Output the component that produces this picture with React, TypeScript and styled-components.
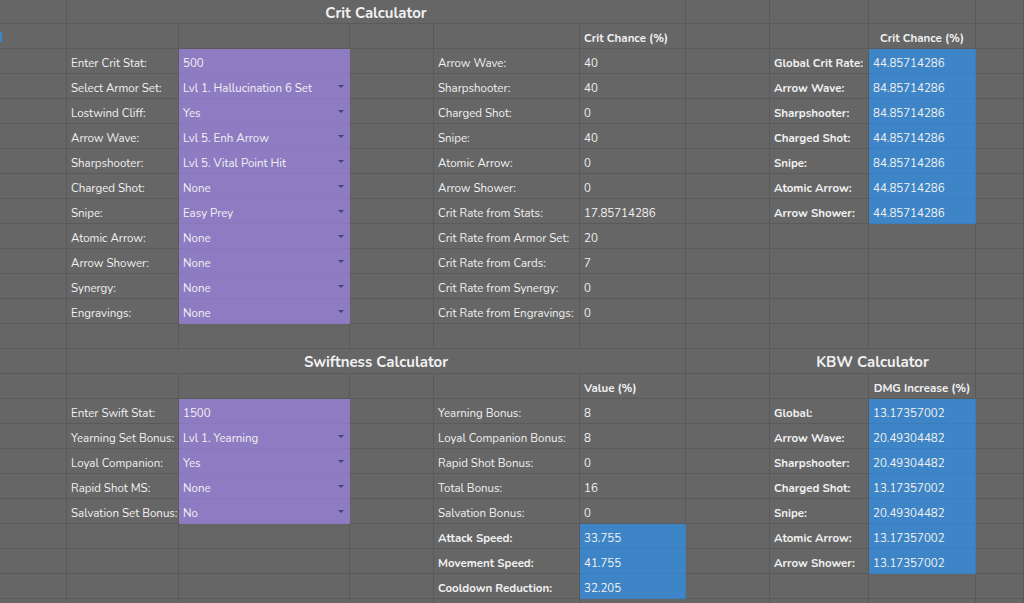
import React from "react";
import styled, { createGlobalStyle, css } from "styled-components";

const Global = createGlobalStyle`
  html, body { margin: 0; padding: 0; background: #666666; overflow: hidden; }
  body { font-family: "Nunito", "Open Sans", "Lato", sans-serif; }
`;

const Sheet = styled.div`
  display: grid;
  grid-template-columns: 67px 112px 171px 84px 146px 106px 84px 99px 107px 48px;
  grid-template-rows: 24px repeat(24, 25px);
  width: 1024px;
  height: 603px;
  overflow: hidden;
  background: #666666;
`;

type Fill = "none" | "purple" | "blue";

const Cell = styled.div<{ $fill?: Fill; $bold?: boolean; $center?: boolean; $title?: boolean; $span?: number }>`
  box-sizing: border-box;
  border-right: 1px solid #5a5a5a;
  border-bottom: 1px solid #5a5a5a;
  color: #f1f1f1;
  font-size: 11.5px;
  padding: 6px 4px 0 4px;
  white-space: nowrap;
  overflow: visible;
  position: relative;
  font-weight: ${(p) => (p.$bold ? 700 : 400)};
  text-align: ${(p) => (p.$center ? "center" : "left")};
  ${(p) => p.$span && css`grid-column: span ${p.$span};`}
  ${(p) => p.$fill === "purple" && css`background: #8e7cc3; border-color: #8a78bd;`}
  ${(p) => p.$fill === "blue" && css`background: #3d85c6; border-color: #3a7fbd;`}
  ${(p) => p.$title && css`font-size: 15px; font-weight: 700; text-align: center; padding-top: 3px;`}
`;

const Arrow = styled.span`
  position: absolute;
  right: 5px;
  top: 11px;
  width: 0;
  height: 0;
  border-left: 3px solid transparent;
  border-right: 3px solid transparent;
  border-top: 3px solid #4a3f78;
`;

const LeftMark = styled.span`
  position: absolute;
  left: 0;
  top: 8px;
  width: 2px;
  height: 10px;
  background: #3d85c6;
`;

type C = { t?: string; f?: Fill; b?: boolean; c?: boolean; dd?: boolean; title?: boolean; span?: number };

const E: C = {};
const rows: C[][] = [];

rows.push([E, { t: "Crit Calculator", title: true, span: 5 }, E, E, E, E]);
rows.push([E, E, E, E, E, { t: "Crit Chance (%)", b: true }, E, E, { t: "Crit Chance (%)", b: true, c: true }, E]);

const critLeft: [string, string, boolean][] = [
  ["Enter Crit Stat:", "500", false],
  ["Select Armor Set:", "Lvl 1. Hallucination 6 Set", true],
  ["Lostwind Cliff:", "Yes", true],
  ["Arrow Wave:", "Lvl 5. Enh Arrow", true],
  ["Sharpshooter:", "Lvl 5. Vital Point Hit", true],
  ["Charged Shot:", "None", true],
  ["Snipe:", "Easy Prey", true],
  ["Atomic Arrow:", "None", true],
  ["Arrow Shower:", "None", true],
  ["Synergy:", "None", true],
  ["Engravings:", "None", true],
];
const critMid: [string, string][] = [
  ["Arrow Wave:", "40"],
  ["Sharpshooter:", "40"],
  ["Charged Shot:", "0"],
  ["Snipe:", "40"],
  ["Atomic Arrow:", "0"],
  ["Arrow Shower:", "0"],
  ["Crit Rate from Stats:", "17.85714286"],
  ["Crit Rate from Armor Set:", "20"],
  ["Crit Rate from Cards:", "7"],
  ["Crit Rate from Synergy:", "0"],
  ["Crit Rate from Engravings:", "0"],
];
const critRight: [string, string][] = [
  ["Global Crit Rate:", "44.85714286"],
  ["Arrow Wave:", "84.85714286"],
  ["Sharpshooter:", "84.85714286"],
  ["Charged Shot:", "44.85714286"],
  ["Snipe:", "84.85714286"],
  ["Atomic Arrow:", "44.85714286"],
  ["Arrow Shower:", "44.85714286"],
];
for (let i = 0; i < 11; i++) {
  const r = critRight[i];
  rows.push([
    E,
    { t: critLeft[i][0] },
    { t: critLeft[i][1], f: "purple", dd: critLeft[i][2] },
    E,
    { t: critMid[i][0] },
    { t: critMid[i][1] },
    E,
    r ? { t: r[0], b: true } : E,
    r ? { t: r[1], f: "blue" } : E,
    E,
  ]);
}
rows.push([E, E, E, E, E, E, E, E, E, E]);
rows.push([E, { t: "Swiftness Calculator", title: true, span: 5 }, E, { t: "KBW Calculator", title: true, span: 2 }, E]);
rows.push([E, E, E, E, E, { t: "Value (%)", b: true }, E, E, { t: "DMG Increase (%)", b: true, c: true }, E]);

const swLeft: [string, string, boolean][] = [
  ["Enter Swift Stat:", "1500", false],
  ["Yearning Set Bonus:", "Lvl 1. Yearning", true],
  ["Loyal Companion:", "Yes", true],
  ["Rapid Shot MS:", "None", true],
  ["Salvation Set Bonus:", "No", true],
];
const swMid: [string, string, boolean][] = [
  ["Yearning Bonus:", "8", false],
  ["Loyal Companion Bonus:", "8", false],
  ["Rapid Shot Bonus:", "0", false],
  ["Total Bonus:", "16", false],
  ["Salvation Bonus:", "0", false],
  ["Attack Speed:", "33.755", true],
  ["Movement Speed:", "41.755", true],
  ["Cooldown Reduction:", "32.205", true],
];
const kbw: [string, string][] = [
  ["Global:", "13.17357002"],
  ["Arrow Wave:", "20.49304482"],
  ["Sharpshooter:", "20.49304482"],
  ["Charged Shot:", "13.17357002"],
  ["Snipe:", "20.49304482"],
  ["Atomic Arrow:", "13.17357002"],
  ["Arrow Shower:", "13.17357002"],
];
for (let i = 0; i < 8; i++) {
  const l = swLeft[i];
  const m = swMid[i];
  const k = kbw[i];
  rows.push([
    E,
    l ? { t: l[0] } : E,
    l ? { t: l[1], f: "purple", dd: l[2] } : E,
    E,
    { t: m[0], b: m[2] },
    { t: m[1], f: m[2] ? "blue" : "none" },
    E,
    k ? { t: k[0], b: true } : E,
    k ? { t: k[1], f: "blue" } : E,
    E,
  ]);
}
rows.push([E, E, E, E, E, E, E, E, E, E]);

export default function App() {
  return (
    <>
      <Global />
      <Sheet>
        {rows.map((row, ri) =>
          row.map((c, ci) => (
            <Cell
              key={`${ri}-${ci}`}
              $fill={c.f}
              $bold={c.b}
              $center={c.c}
              $title={c.title}
              $span={c.span}
            >
              {ri === 1 && ci === 0 && <LeftMark />}
              {c.t}
              {c.dd && <Arrow />}
            </Cell>
          ))
        )}
      </Sheet>
    </>
  );
}
